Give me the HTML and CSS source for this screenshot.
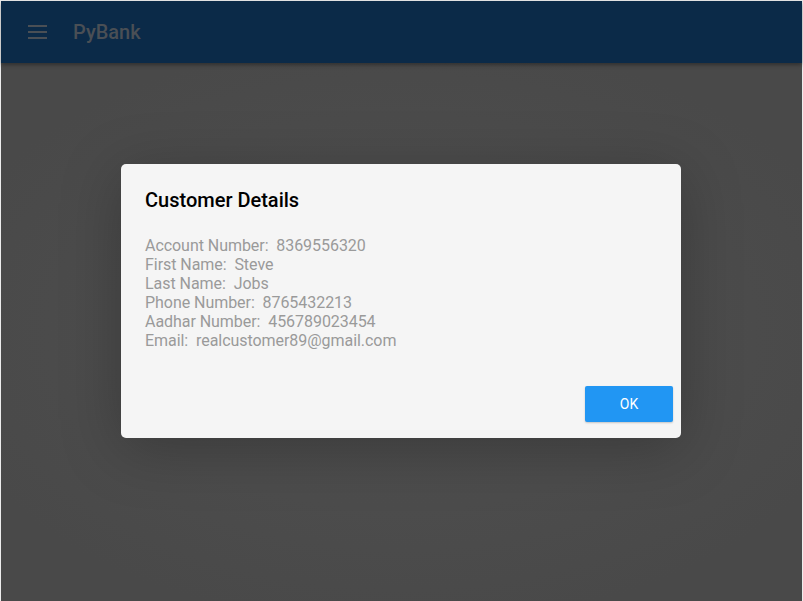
FILE: index.html
```html
<!DOCTYPE html>
<html>
<head>
<meta charset="utf-8">
<link rel="stylesheet" href="styles.css">
</head>
<body>
<div class="window">
  <header class="appbar">
    <svg class="menu" width="20" height="14" viewBox="0 0 20 14">
      <rect x="0" y="0" width="19" height="2" fill="#4a4f55"/>
      <rect x="0" y="6" width="19" height="2" fill="#4a4f55"/>
      <rect x="0" y="12" width="19" height="2" fill="#4a4f55"/>
    </svg>
    <span class="brand">PyBank</span>
  </header>
  <main class="content"></main>
  <div class="overlay">
    <div class="dialog">
      <h2 class="title">Customer Details</h2>
      <div class="details">
        <div>Account Number:&nbsp; 8369556320</div>
        <div>First Name:&nbsp; Steve</div>
        <div>Last Name:&nbsp; Jobs</div>
        <div>Phone Number:&nbsp; 8765432213</div>
        <div>Aadhar Number:&nbsp; 456789023454</div>
        <div>Email:&nbsp; realcustomer89@gmail.com</div>
      </div>
      <div class="actions">
        <button class="ok">OK</button>
      </div>
    </div>
  </div>
</div>
</body>
</html>
```

FILE: styles.css
```css
html, body {
  margin: 0;
  padding: 0;
  width: 803px;
  height: 601px;
  overflow: hidden;
  font-family: Roboto, "Liberation Sans", sans-serif;
}
.window {
  position: relative;
  width: 803px;
  height: 601px;
  box-sizing: border-box;
  border-top: 1px solid #ececec;
  border-left: 1px solid #ececec;
  border-right: 1px solid #ececec;
  display: flex;
  flex-direction: column;
  background: #4b4b4b;
}
.appbar {
  height: 62px;
  flex: none;
  background: #0b2a48;
  display: flex;
  align-items: center;
  padding-left: 27px;
  gap: 25px;
  box-shadow: 0 2px 4px rgba(0,0,0,0.35);
  position: relative;
  z-index: 1;
}
.menu { display: block; }
.brand {
  color: #4a4f55;
  font-size: 20px;
  font-weight: 500;
}
.content {
  flex: 1;
  background: radial-gradient(ellipse 60% 55% at 50% 50%, #4e4e4e 0%, #4c4c4c 60%, #494949 100%);
}
.overlay {
  position: absolute;
  top: 0;
  left: -1px;
  width: 803px;
  height: 600px;
  display: flex;
  align-items: flex-start;
  justify-content: center;
  z-index: 2;
}
.dialog {
  width: 560px;
  height: 274px;
  box-sizing: border-box;
  margin-top: 163px;
  margin-left: -1px;
  background: #f5f5f5;
  border-radius: 5px;
  padding: 24px 8px 16px 24px;
  display: flex;
  flex-direction: column;
  box-shadow: 0 10px 60px rgba(0,0,0,0.25);
}
.title {
  margin: 0;
  font-size: 20px;
  font-weight: 500;
  color: #000;
  line-height: 24px;
}
.details {
  margin-top: 24px;
  font-size: 16px;
  line-height: 19px;
  letter-spacing: -0.05px;
  color: #9a9a9a;
}
.actions {
  margin-top: auto;
  display: flex;
  justify-content: flex-end;
}
.ok {
  width: 88px;
  height: 36px;
  border: none;
  border-radius: 2px;
  background: #2196f3;
  color: #fff;
  font-family: Roboto, "Liberation Sans", sans-serif;
  font-size: 14px;
  box-shadow: 0 1px 2px rgba(0,0,0,0.2);
}
```
